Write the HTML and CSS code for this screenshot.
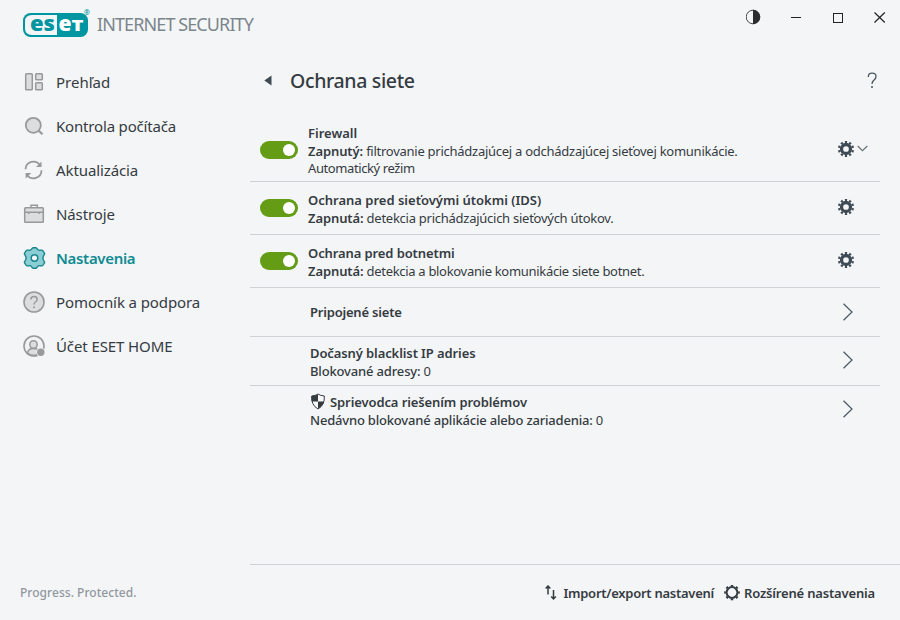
FILE: index.html
```html
<!DOCTYPE html>
<html lang="sk">
<head>
<meta charset="utf-8">
<title>ESET Internet Security</title>
<link rel="stylesheet" href="styles.css">
</head>
<body>
<svg class="defs" width="0" height="0" aria-hidden="true">
  <symbol id="gear" viewBox="0 0 16 16">
    <circle cx="8" cy="8" r="4.500" fill="none" stroke="#3f4b54" stroke-width="3.300"/>
    <circle cx="8" cy="8" r="7" fill="none" stroke="#3f4b54" stroke-width="2.200" pathLength="200" stroke-dasharray="10 10" stroke-dashoffset="5" transform="rotate(-90 8 8)"/>
  </symbol>
  <symbol id="next" viewBox="0 0 12 18"><path d="M1.5 .8 10 9 1.5 17.2" fill="none" stroke="#4b565e" stroke-width="1.2"/></symbol>
</svg>
<div class="window">
  <header class="titlebar">
    <svg class="logo" width="68" height="30" viewBox="0 0 68 30">
      <rect x="0" y="5" width="65" height="24" rx="7.500" fill="#0096a1"/>
      <path d="M34 7H9Q2 7 2 13.500V20.500Q2 27 9 27H34Z" fill="#f4f5f7"/>
      <text class="logo-text" x="7" y="23" textLength="25" lengthAdjust="spacingAndGlyphs" fill="#0096a1">es</text>
      <text class="logo-text" x="35.500" y="23" textLength="13" lengthAdjust="spacingAndGlyphs" fill="#fff">e</text>
      <text class="logo-cap" x="48.500" y="23" textLength="12" lengthAdjust="spacingAndGlyphs" fill="#fff">T</text>
      <text class="reg" x="61" y="6.500">®</text>
    </svg>
    <span class="product">INTERNET SECURITY</span>
    <div class="controls">
      <svg width="16" height="16" viewBox="0 0 16 16"><circle cx="7" cy="8" r="6.800" fill="none" stroke="#333" stroke-width=".9"/><path d="M7 .8a7.200 7.200 0 0 1 0 14.400z" fill="#2c2d2f"/></svg>
      <svg width="16" height="16" viewBox="0 0 16 16"><path d="M3 8.500H13" stroke="#222" /></svg>
      <svg width="16" height="16" viewBox="0 0 16 16"><rect x="3.500" y="4.500" width="9" height="9" fill="none" stroke="#222"/></svg>
      <svg width="16" height="16" viewBox="0 0 16 16"><path d="M2.500 3.500 12.800 13.500M12.800 3.500 2.500 13.500" stroke="#222" stroke-width="1.200"/></svg>
    </div>
  </header>
  <nav class="nav">
    <a class="item"><svg width="24" height="24" viewBox="0 0 24 24" fill="#dcdddf" stroke="#999" stroke-width="1.500"><rect x="3.700" y="3.700" width="6.600" height="16" rx=".8"/><rect x="13.700" y="3.700" width="6.600" height="6" rx=".8"/><rect x="13.700" y="12.700" width="6.600" height="7" rx=".8"/></svg><span class="n1">Prehľad</span></a>
    <a class="item"><svg width="24" height="24" viewBox="0 0 24 24"><circle cx="11.300" cy="11.300" r="7.500" fill="#dcdddf" stroke="#999" stroke-width="1.800"/><path d="M16.600 16.600 20.500 20.300" stroke="#999" stroke-width="2.200"/></svg><span class="n2">Kontrola počítača</span></a>
    <a class="item"><svg width="24" height="24" viewBox="0 0 24 24" fill="none" stroke="#999" stroke-width="1.800"><path d="M3.500 11.300A8 8 0 0 1 18 7M19.500 12.300A8 8 0 0 1 5 17"/><path d="M19.500 3.500V9H14zM3.600 20.500V15H9.300z" fill="#999" stroke="none"/></svg><span class="n3">Aktualizácia</span></a>
    <a class="item"><svg width="24" height="24" viewBox="0 0 24 24" fill="#dcdddf" stroke="#999" stroke-width="1.500"><path d="M9 6V3.200H15.300V6" fill="none"/><rect x="2.700" y="5.800" width="18.600" height="14.500" rx=".8"/><path d="M2.700 10.300H21.300M6.800 10V12M17.200 10V12"/></svg><span class="n4">Nástroje</span></a>
    <a class="item active"><svg width="24" height="24" viewBox="-12.500 -12 24 24"><path d="M-2.900-8.800Q-2.200-10.300-1.300-10.300H1.300Q2.200-10.300 2.900-8.800Q3.800-7.500 5.500-7.700L7-7.900Q8-8 8.600-7L9.900-4.900Q10.400-4 9.600-3.200Q7.200 0 9.600 3.200Q10.400 4 9.900 4.900L8.600 7Q8 8 7 7.900L5.500 7.700Q3.800 7.500 2.900 8.800Q2.200 10.300 1.300 10.300H-1.300Q-2.200 10.300-2.900 8.800Q-3.800 7.500-5.500 7.700L-7 7.900Q-8 8-8.600 7L-9.900 4.900Q-10.400 4-9.600 3.200Q-7.200 0-9.600-3.200Q-10.400-4-9.900-4.900L-8.600-7Q-8-8-7-7.900L-5.500-7.700Q-3.800-7.500-2.900-8.800Z" fill="#8acdd4" stroke="#16868c" stroke-width="1.400"/><circle r="3.300" fill="#f4f5f7" stroke="#16868c" stroke-width="1.400"/></svg><span class="n5">Nastavenia</span></a>
    <a class="item"><svg width="24" height="24" viewBox="0 0 24 24"><circle cx="12" cy="12" r="10" fill="#dcdddf" stroke="#999" stroke-width="1.600"/><path d="M8.800 9.500Q9 6.500 12 6.500T15.200 9.300Q15.200 10.800 13.500 12Q12 13 12 14.500" fill="none" stroke="#999" stroke-width="1.500"/><circle cx="12" cy="17.300" r="1" fill="#999"/></svg><span class="n6">Pomocník a podpora</span></a>
    <a class="item"><svg width="24" height="24" viewBox="0 0 24 24"><circle cx="12" cy="12" r="10" fill="#f1f2f3" stroke="#999" stroke-width="1.600"/><path d="M5.500 19Q6 14.500 11.500 14.500T17 17.500L14 21.200Q9 22 5.500 19Z" fill="#dcdddf" stroke="#999" stroke-width="1.500"/><circle cx="11.500" cy="10.500" r="3.700" fill="#dcdddf" stroke="#999" stroke-width="1.500"/><circle cx="18.800" cy="18.200" r="4.600" fill="#f4f5f7"/><circle cx="18.800" cy="18.200" r="3.700" fill="#999"/></svg><span class="n7">Účet ESET HOME</span></a>
  </nav>
  <main class="main">
    <div class="heading">
      <svg width="8" height="12" viewBox="0 0 8 12"><path d="M7.500 .5V10.500L.3 5.500z" fill="#3f4b54"/></svg>
      <h1>Ochrana siete</h1>
      <svg class="help" width="12" height="18" viewBox="0 0 12 18"><path d="M2.300 5Q2.300 1.200 6.200 1.200T10 4.500Q10 6.500 8 8.100Q6 9.500 6 12" fill="none" stroke="#4b565e" stroke-width="1.300"/><circle cx="6" cy="15" r="1" fill="#4b565e"/></svg>
    </div>
    <section class="row fw">
      <i class="toggle"></i>
      <div class="copy"><b class="t1">Firewall</b><span class="l1"><b>Zapnutý:</b> filtrovanie prichádzajúcej a odchádzajúcej sieťovej komunikácie.</span><span class="l1b">Automatický režim</span></div>
      <div class="action"><svg width="16" height="16"><use href="#gear"/></svg><svg width="11" height="7" viewBox="0 0 11 7"><path d="M.7 1 5.500 5.700 10.300 1" fill="none" stroke="#67727a" stroke-width="1.200"/></svg></div>
    </section>
    <section class="row">
      <i class="toggle"></i>
      <div class="copy"><b class="t2">Ochrana pred sieťovými útokmi (IDS)</b><span class="l2"><b>Zapnutá:</b> detekcia prichádzajúcich sieťových útokov.</span></div>
      <div class="action"><svg width="16" height="16"><use href="#gear"/></svg></div>
    </section>
    <section class="row">
      <i class="toggle"></i>
      <div class="copy"><b class="t3">Ochrana pred botnetmi</b><span class="l3"><b>Zapnutá:</b> detekcia a blokovanie komunikácie siete botnet.</span></div>
      <div class="action"><svg width="16" height="16"><use href="#gear"/></svg></div>
    </section>
    <section class="row link single">
      <div class="copy"><b class="t4">Pripojené siete</b></div>
      <div class="action"><svg width="12" height="18"><use href="#next"/></svg></div>
    </section>
    <section class="row link">
      <div class="copy"><b class="t5">Dočasný blacklist IP adries</b><span class="l5 semi">Blokované adresy: <em>0</em></span></div>
      <div class="action"><svg width="12" height="18"><use href="#next"/></svg></div>
    </section>
    <section class="row link last">
      <div class="copy"><b class="shielded"><svg width="16" height="18" viewBox="0 0 16 18"><path d="M8 1Q10.500 2.800 14.300 3Q15 12 8 16Q1 12 1.700 3Q5.500 2.800 8 1Z" fill="#f8f8f9" stroke="#343b41" stroke-width="1"/><path d="M8 1.500V8.500H1.800Q1.500 5.500 1.700 3Q5.500 2.800 8 1.500ZM8 8.500H14Q13 13 8 15.800Z" fill="#343b41"/></svg><span class="t6">Sprievodca riešením problémov</span></b><span class="l6 semi">Nedávno blokované aplikácie alebo zariadenia: <em>0</em></span></div>
      <div class="action"><svg width="12" height="18"><use href="#next"/></svg></div>
    </section>
  </main>
  <footer class="footer">
    <span class="slogan">Progress. Protected.</span>
    <div class="links">
      <a><svg width="12" height="16" viewBox="0 0 12 16" fill="none" stroke="#343b41" stroke-width="1.500"><path d="M3 9.500V.8M.7 3.500 3 1 5.300 3.500M8.500 5V14M6.200 11.500 8.500 14 10.800 11.500"/></svg><span class="f1">Import/export nastavení</span></a>
      <a class="adv"><svg width="16" height="16" viewBox="0 0 16 16" fill="none" stroke="#343b41"><circle cx="8" cy="7.500" r="5.400" stroke-width="2"/><circle cx="8" cy="7.500" r="7" stroke-width="1.700" pathLength="160" stroke-dasharray="9 11" stroke-dashoffset="4.500"/></svg><span class="f2">Rozšírené nastavenia</span></a>
    </div>
  </footer>
</div>
</body>
</html>
```
FILE: styles.css
```css
* { box-sizing: border-box; }
body { margin: 0; background: #f4f5f7; color: #343b41; font: 13px/18px "Noto Sans", "Open Sans", sans-serif; }
svg { display: block; flex: none; }
.defs { position: absolute; }
.window { width: 900px; height: 620px; display: grid; grid-template: 60px 504px 56px / 250px 650px; }
.titlebar { grid-column: 1 / 3; display: flex; align-items: flex-start; padding: 8px 12px 0 23px; }
.logo-text { font: 900 21px "Open Sans", sans-serif; }
.logo-cap { font: 800 16px "Open Sans", sans-serif; }
.reg { font: 700 7px "Open Sans", sans-serif; fill: #0096a1; }
.product { margin: 4px 0 0 6px; color: #7b858c; font-size: 18px; line-height: 24px; letter-spacing: -.9px; white-space: nowrap; }
.controls { display: flex; gap: 26px; margin-left: auto; padding-top: 1px; }
.nav { padding: 0 0 0 22px; }
.item { display: flex; align-items: center; gap: 10px; height: 44px; font-size: 15px; white-space: nowrap; }
.item.active { color: #0f8b93; font-weight: 600; }
.n2 { letter-spacing: -.18px; }
.n3, .n4, .n6, .n7 { letter-spacing: -.1px; }
.n5 { letter-spacing: -.32px; }
.main { padding-right: 20px; }
.heading { display: flex; align-items: center; height: 42px; padding: 0 2px 0 14px; }
h1 { margin: 0 0 0 18px; font-size: 19.5px; font-weight: 500; line-height: 28px; letter-spacing: -.35px; white-space: nowrap; }
.help { margin-left: auto; }
.row { display: flex; align-items: center; height: 53px; border-bottom: 1px solid #cfd2d5; padding-left: 10px; }
.fw { height: 80px; padding-top: 16px; }
.copy { display: flex; flex-direction: column; align-items: flex-start; margin: 2px 0 0 10px; white-space: nowrap; }
.copy b { font-weight: 600; letter-spacing: 0; }
.copy span b { letter-spacing: -.1px; }
.copy .t3, .copy .t5, .t6 { letter-spacing: -.1px; }
.copy .t4 { letter-spacing: -.2px; }
.l1, .l2 { letter-spacing: -.26px; }
.l3 { letter-spacing: -.31px; }
.l1b { letter-spacing: -.4px; line-height: 17px; }
.l5 { letter-spacing: -.16px; }
.l6 { letter-spacing: -.19px; }
.semi { font-weight: 500; }
.semi em { font-style: normal; font-weight: 400; }
.toggle { width: 38px; height: 18px; border-radius: 9px; padding: 3px; background: #659c16; display: flex; justify-content: flex-end; }
.toggle::after { content: ""; width: 12px; height: 12px; border-radius: 50%; background: #fff; }
.action { display: flex; align-items: center; gap: 3px; width: 42px; margin: 0 0 2px auto; }
.link { height: 49px; padding-left: 50px; }
.link .action { width: 38px; }
.single .copy { margin-top: 0; }
.single .action { margin-bottom: 0; }
.last { height: 48px; border-bottom: 0; }
.shielded { display: flex; gap: 4px; }
.footer { grid-column: 1 / 3; display: grid; grid-template-columns: 250px 650px; align-items: stretch; }
.slogan { padding: 20px 0 0 20px; color: #90979d; font-size: 12px; font-weight: 500; letter-spacing: .04px; }
.links { display: flex; align-items: center; justify-content: flex-end; border-top: 1px solid #cfd2d5; padding-right: 25px; gap: 10px; font-weight: 600; white-space: nowrap; }
.links a { display: flex; align-items: center; gap: 6px; }
.links .adv { gap: 4px; }
.f1 { letter-spacing: -.26px; }
.f2 { letter-spacing: -.17px; }
```
